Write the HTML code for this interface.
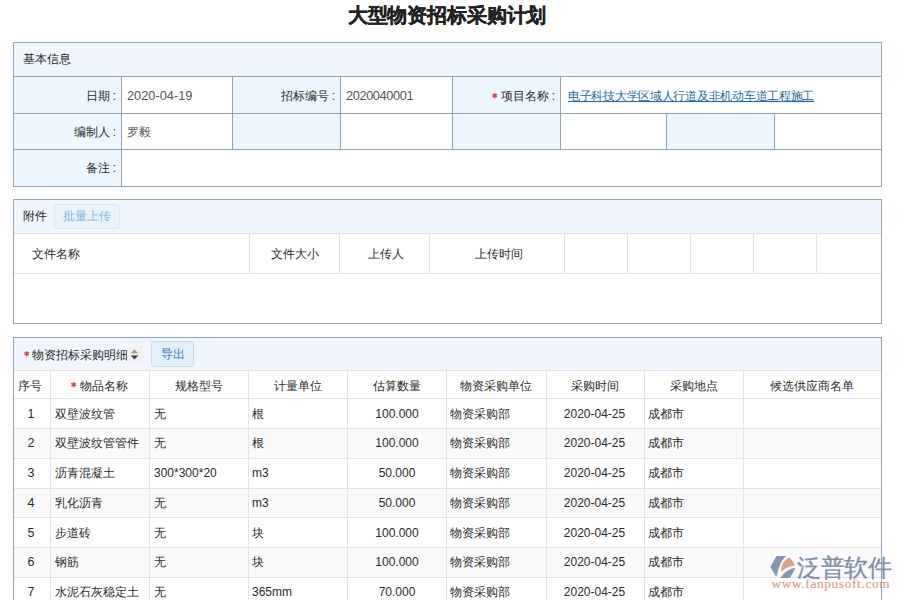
<!DOCTYPE html>
<html><head><meta charset="utf-8"><style>
html,body{margin:0;padding:0;}
body{width:900px;height:600px;position:relative;overflow:hidden;background:#fff;font-family:"Liberation Sans",sans-serif;}
body>div,body>span{position:absolute;box-sizing:border-box;}
.t{white-space:nowrap;}
</style></head><body>
<span class="t" style="left:297.0px;top:4px;width:300px;text-align:center;font-size:20px;color:#222;font-weight:bold;line-height:22px;letter-spacing:-0.15px;-webkit-text-stroke:0.35px #222">大型物资招标采购计划</span>
<div style="left:13px;top:42px;width:869px;height:145px;background:#fff"></div>
<div style="left:13px;top:42px;width:869px;height:34px;background:#f1f6fe"></div>
<div style="left:13px;top:76px;width:108px;height:110px;background:#eff7fe"></div>
<div style="left:232px;top:76px;width:108px;height:37px;background:#eff7fe"></div>
<div style="left:452px;top:76px;width:108px;height:37px;background:#eff7fe"></div>
<div style="left:232px;top:113px;width:108px;height:36px;background:#eff7fe"></div>
<div style="left:452px;top:113px;width:108px;height:36px;background:#eff7fe"></div>
<div style="left:666px;top:113px;width:108px;height:36px;background:#eff7fe"></div>
<div style="left:13px;top:42px;width:869px;height:1px;background:#8fa6b2"></div>
<div style="left:13px;top:76px;width:869px;height:1px;background:#8fa6b2"></div>
<div style="left:13px;top:113px;width:869px;height:1px;background:#8fa6b2"></div>
<div style="left:13px;top:149px;width:869px;height:1px;background:#8fa6b2"></div>
<div style="left:13px;top:186px;width:869px;height:1px;background:#8fa6b2"></div>
<div style="left:13px;top:42px;width:1px;height:145px;background:#8fa6b2"></div>
<div style="left:881px;top:42px;width:1px;height:145px;background:#8fa6b2"></div>
<div style="left:121px;top:76px;width:1px;height:110px;background:#8fa6b2"></div>
<div style="left:232px;top:76px;width:1px;height:73px;background:#8fa6b2"></div>
<div style="left:340px;top:76px;width:1px;height:73px;background:#8fa6b2"></div>
<div style="left:452px;top:76px;width:1px;height:73px;background:#8fa6b2"></div>
<div style="left:560px;top:76px;width:1px;height:73px;background:#8fa6b2"></div>
<div style="left:666px;top:113px;width:1px;height:36px;background:#8fa6b2"></div>
<div style="left:774px;top:113px;width:1px;height:36px;background:#8fa6b2"></div>
<span class="t" style="left:23px;top:50.5px;font-size:12px;color:#2a2a2a;line-height:16px">基本信息</span>
<span class="t" style="left:-184px;top:88px;width:300px;text-align:right;font-size:12px;color:#2a2a2a;line-height:16px">日期<span style="margin-left:3px">:</span></span>
<span class="t" style="left:127px;top:88px;font-size:12.8px;color:#555;line-height:16px">2020-04-19</span>
<span class="t" style="left:35px;top:88px;width:300px;text-align:right;font-size:12px;color:#2a2a2a;line-height:16px">招标编号<span style="margin-left:3px">:</span></span>
<span class="t" style="left:346px;top:88px;font-size:12.8px;color:#555;line-height:16px;letter-spacing:-0.4px">2020040001</span>
<svg style="position:absolute;left:491.3px;top:92.1px" width="7.4" height="7.4" viewBox="0 0 7.4 7.4"><path d="M3.70 1.00L3.70 6.40M6.04 2.35L1.36 5.05M1.36 2.35L6.04 5.05" stroke="#e23c3c" stroke-width="1.3" fill="none"/></svg>
<span class="t" style="left:255px;top:88px;width:300px;text-align:right;font-size:12px;color:#2a2a2a;line-height:16px">项目名称<span style="margin-left:3px">:</span></span>
<span class="t" style="left:568px;top:88px;font-size:12px;color:#2069a8;line-height:16px;text-decoration:underline;letter-spacing:-0.28px">电子科技大学区域人行道及非机动车道工程施工</span>
<span class="t" style="left:-184px;top:124px;width:300px;text-align:right;font-size:12px;color:#2a2a2a;line-height:16px">编制人<span style="margin-left:3px">:</span></span>
<span class="t" style="left:127px;top:124px;font-size:12px;color:#555;line-height:16px">罗毅</span>
<span class="t" style="left:-184px;top:160px;width:300px;text-align:right;font-size:12px;color:#2a2a2a;line-height:16px">备注<span style="margin-left:3px">:</span></span>
<div style="left:13px;top:199px;width:869px;height:125px;background:#fff"></div>
<div style="left:13px;top:199px;width:869px;height:34px;background:#f1f6fe"></div>
<div style="left:13px;top:199px;width:869px;height:1px;background:#8fa6b2"></div>
<div style="left:13px;top:323px;width:869px;height:1px;background:#8fa6b2"></div>
<div style="left:13px;top:199px;width:1px;height:125px;background:#8fa6b2"></div>
<div style="left:881px;top:199px;width:1px;height:125px;background:#8fa6b2"></div>
<div style="left:14px;top:233px;width:867px;height:1px;background:#e3e3e3"></div>
<div style="left:14px;top:273px;width:867px;height:1px;background:#e3e3e3"></div>
<div style="left:249px;top:233px;width:1px;height:40px;background:#e3e3e3"></div>
<div style="left:339px;top:233px;width:1px;height:40px;background:#e3e3e3"></div>
<div style="left:429px;top:233px;width:1px;height:40px;background:#e3e3e3"></div>
<div style="left:564px;top:233px;width:1px;height:40px;background:#e3e3e3"></div>
<div style="left:627px;top:233px;width:1px;height:40px;background:#e3e3e3"></div>
<div style="left:690px;top:233px;width:1px;height:40px;background:#e3e3e3"></div>
<div style="left:753px;top:233px;width:1px;height:40px;background:#e3e3e3"></div>
<div style="left:816px;top:233px;width:1px;height:40px;background:#e3e3e3"></div>
<span class="t" style="left:23px;top:208px;font-size:12px;color:#2a2a2a;line-height:16px">附件</span>
<div style="left:54px;top:204px;width:64px;height:23px;border:1px solid #dae7f2;background:#eaf3fc;border-radius:3px;box-sizing:content-box"></div>
<span class="t" style="left:47.0px;top:208px;width:80px;text-align:center;font-size:12px;color:#80b6e2;line-height:16px">批量上传</span>
<span class="t" style="left:32px;top:246px;font-size:12px;color:#2a2a2a;line-height:16px">文件名称</span>
<span class="t" style="left:249.5px;top:246px;width:90px;text-align:center;font-size:12px;color:#2a2a2a;line-height:16px">文件大小</span>
<span class="t" style="left:341.0px;top:246px;width:90px;text-align:center;font-size:12px;color:#2a2a2a;line-height:16px">上传人</span>
<span class="t" style="left:433.5px;top:246px;width:130px;text-align:center;font-size:12px;color:#2a2a2a;line-height:16px">上传时间</span>
<div style="left:13px;top:337px;width:869px;height:263px;background:#fff"></div>
<div style="left:13px;top:337px;width:869px;height:33px;background:#f1f6fe"></div>
<div style="left:14px;top:428px;width:867px;height:1px;background:#e3e3e3"></div>
<div style="left:14px;top:429px;width:867px;height:29px;background:#fafafa"></div>
<div style="left:14px;top:458px;width:867px;height:1px;background:#e3e3e3"></div>
<div style="left:14px;top:488px;width:867px;height:1px;background:#e3e3e3"></div>
<div style="left:14px;top:489px;width:867px;height:28px;background:#fafafa"></div>
<div style="left:14px;top:517px;width:867px;height:1px;background:#e3e3e3"></div>
<div style="left:14px;top:547px;width:867px;height:1px;background:#e3e3e3"></div>
<div style="left:14px;top:548px;width:867px;height:29px;background:#fafafa"></div>
<div style="left:14px;top:577px;width:867px;height:1px;background:#e3e3e3"></div>
<div style="left:14px;top:607px;width:867px;height:1px;background:#e3e3e3"></div>
<div style="left:14px;top:370px;width:867px;height:1px;background:#e3e3e3"></div>
<div style="left:14px;top:398px;width:867px;height:1px;background:#e3e3e3"></div>
<div style="left:50px;top:370px;width:1px;height:230px;background:#e3e3e3"></div>
<div style="left:149px;top:370px;width:1px;height:230px;background:#e3e3e3"></div>
<div style="left:248px;top:370px;width:1px;height:230px;background:#e3e3e3"></div>
<div style="left:347px;top:370px;width:1px;height:230px;background:#e3e3e3"></div>
<div style="left:446px;top:370px;width:1px;height:230px;background:#e3e3e3"></div>
<div style="left:546px;top:370px;width:1px;height:230px;background:#e3e3e3"></div>
<div style="left:644px;top:370px;width:1px;height:230px;background:#e3e3e3"></div>
<div style="left:743px;top:370px;width:1px;height:230px;background:#e3e3e3"></div>
<svg style="position:absolute;left:22.5px;top:349.90000000000003px" width="7.4" height="7.4" viewBox="0 0 7.4 7.4"><path d="M3.70 1.00L3.70 6.40M6.04 2.35L1.36 5.05M1.36 2.35L6.04 5.05" stroke="#e23c3c" stroke-width="1.3" fill="none"/></svg>
<span class="t" style="left:32px;top:346.5px;font-size:12px;color:#2a2a2a;line-height:16px">物资招标采购明细</span>
<div style="left:127px;top:346px;width:16px;height:16px;background:#f1f1f1"></div>
<svg style="position:absolute;left:126px;top:346px" width="17" height="16" viewBox="0 0 17 16"><path d="M4.7 7.2 L8.5 3.4 L12.3 7.2 Z" fill="#9a9a9a"/><path d="M4.7 9.6 L8.5 13.6 L12.3 9.6 Z" fill="#404040"/></svg>
<div style="left:151px;top:341px;width:41px;height:24px;border:1px solid #c6dbed;background:#e3effb;border-radius:3px;box-sizing:content-box"></div>
<span class="t" style="left:147.5px;top:345.5px;width:50px;text-align:center;font-size:12px;color:#2a78c0;line-height:16px">导出</span>
<span class="t" style="left:11.8px;top:377.5px;width:37px;text-align:center;font-size:12px;color:#2a2a2a;line-height:16px">序号</span>
<svg style="position:absolute;left:69.7px;top:381.2px" width="7.4" height="7.4" viewBox="0 0 7.4 7.4"><path d="M3.70 1.00L3.70 6.40M6.04 2.35L1.36 5.05M1.36 2.35L6.04 5.05" stroke="#e23c3c" stroke-width="1.3" fill="none"/></svg>
<span class="t" style="left:79.5px;top:377.5px;font-size:12px;color:#2a2a2a;line-height:16px">物品名称</span>
<span class="t" style="left:128.5px;top:377.5px;width:140px;text-align:center;font-size:12px;color:#2a2a2a;line-height:16px">规格型号</span>
<span class="t" style="left:227.5px;top:377.5px;width:140px;text-align:center;font-size:12px;color:#2a2a2a;line-height:16px">计量单位</span>
<span class="t" style="left:326.5px;top:377.5px;width:140px;text-align:center;font-size:12px;color:#2a2a2a;line-height:16px">估算数量</span>
<span class="t" style="left:426.0px;top:377.5px;width:140px;text-align:center;font-size:12px;color:#2a2a2a;line-height:16px">物资采购单位</span>
<span class="t" style="left:525.0px;top:377.5px;width:140px;text-align:center;font-size:12px;color:#2a2a2a;line-height:16px">采购时间</span>
<span class="t" style="left:623.5px;top:377.5px;width:140px;text-align:center;font-size:12px;color:#2a2a2a;line-height:16px">采购地点</span>
<span class="t" style="left:742.0px;top:377.5px;width:140px;text-align:center;font-size:12px;color:#2a2a2a;line-height:16px">候选供应商名单</span>
<span class="t" style="left:12.5px;top:406px;width:37px;text-align:center;font-size:12.5px;color:#2a2a2a;line-height:16px">1</span>
<span class="t" style="left:55px;top:406px;font-size:12px;color:#2a2a2a;line-height:16px">双壁波纹管</span>
<span class="t" style="left:154px;top:406px;font-size:12px;color:#2a2a2a;line-height:16px">无</span>
<span class="t" style="left:252px;top:406px;font-size:12px;color:#2a2a2a;line-height:16px">根</span>
<span class="t" style="left:347.5px;top:406px;width:99px;text-align:center;font-size:12px;color:#2a2a2a;line-height:16px">100.000</span>
<span class="t" style="left:450px;top:406px;font-size:12px;color:#2a2a2a;line-height:16px">物资采购部</span>
<span class="t" style="left:545.0px;top:406px;width:99px;text-align:center;font-size:12px;color:#2a2a2a;line-height:16px">2020-04-25</span>
<span class="t" style="left:648px;top:406px;font-size:12px;color:#2a2a2a;line-height:16px">成都市</span>
<span class="t" style="left:12.5px;top:435px;width:37px;text-align:center;font-size:12.5px;color:#2a2a2a;line-height:16px">2</span>
<span class="t" style="left:55px;top:435px;font-size:12px;color:#2a2a2a;line-height:16px">双壁波纹管管件</span>
<span class="t" style="left:154px;top:435px;font-size:12px;color:#2a2a2a;line-height:16px">无</span>
<span class="t" style="left:252px;top:435px;font-size:12px;color:#2a2a2a;line-height:16px">根</span>
<span class="t" style="left:347.5px;top:435px;width:99px;text-align:center;font-size:12px;color:#2a2a2a;line-height:16px">100.000</span>
<span class="t" style="left:450px;top:435px;font-size:12px;color:#2a2a2a;line-height:16px">物资采购部</span>
<span class="t" style="left:545.0px;top:435px;width:99px;text-align:center;font-size:12px;color:#2a2a2a;line-height:16px">2020-04-25</span>
<span class="t" style="left:648px;top:435px;font-size:12px;color:#2a2a2a;line-height:16px">成都市</span>
<span class="t" style="left:12.5px;top:465px;width:37px;text-align:center;font-size:12.5px;color:#2a2a2a;line-height:16px">3</span>
<span class="t" style="left:55px;top:465px;font-size:12px;color:#2a2a2a;line-height:16px">沥青混凝土</span>
<span class="t" style="left:154px;top:465px;font-size:12px;color:#2a2a2a;line-height:16px">300*300*20</span>
<span class="t" style="left:252px;top:465px;font-size:12px;color:#2a2a2a;line-height:16px">m3</span>
<span class="t" style="left:347.5px;top:465px;width:99px;text-align:center;font-size:12px;color:#2a2a2a;line-height:16px">50.000</span>
<span class="t" style="left:450px;top:465px;font-size:12px;color:#2a2a2a;line-height:16px">物资采购部</span>
<span class="t" style="left:545.0px;top:465px;width:99px;text-align:center;font-size:12px;color:#2a2a2a;line-height:16px">2020-04-25</span>
<span class="t" style="left:648px;top:465px;font-size:12px;color:#2a2a2a;line-height:16px">成都市</span>
<span class="t" style="left:12.5px;top:495px;width:37px;text-align:center;font-size:12.5px;color:#2a2a2a;line-height:16px">4</span>
<span class="t" style="left:55px;top:495px;font-size:12px;color:#2a2a2a;line-height:16px">乳化沥青</span>
<span class="t" style="left:154px;top:495px;font-size:12px;color:#2a2a2a;line-height:16px">无</span>
<span class="t" style="left:252px;top:495px;font-size:12px;color:#2a2a2a;line-height:16px">m3</span>
<span class="t" style="left:347.5px;top:495px;width:99px;text-align:center;font-size:12px;color:#2a2a2a;line-height:16px">50.000</span>
<span class="t" style="left:450px;top:495px;font-size:12px;color:#2a2a2a;line-height:16px">物资采购部</span>
<span class="t" style="left:545.0px;top:495px;width:99px;text-align:center;font-size:12px;color:#2a2a2a;line-height:16px">2020-04-25</span>
<span class="t" style="left:648px;top:495px;font-size:12px;color:#2a2a2a;line-height:16px">成都市</span>
<span class="t" style="left:12.5px;top:525px;width:37px;text-align:center;font-size:12.5px;color:#2a2a2a;line-height:16px">5</span>
<span class="t" style="left:55px;top:525px;font-size:12px;color:#2a2a2a;line-height:16px">步道砖</span>
<span class="t" style="left:154px;top:525px;font-size:12px;color:#2a2a2a;line-height:16px">无</span>
<span class="t" style="left:252px;top:525px;font-size:12px;color:#2a2a2a;line-height:16px">块</span>
<span class="t" style="left:347.5px;top:525px;width:99px;text-align:center;font-size:12px;color:#2a2a2a;line-height:16px">100.000</span>
<span class="t" style="left:450px;top:525px;font-size:12px;color:#2a2a2a;line-height:16px">物资采购部</span>
<span class="t" style="left:545.0px;top:525px;width:99px;text-align:center;font-size:12px;color:#2a2a2a;line-height:16px">2020-04-25</span>
<span class="t" style="left:648px;top:525px;font-size:12px;color:#2a2a2a;line-height:16px">成都市</span>
<span class="t" style="left:12.5px;top:554px;width:37px;text-align:center;font-size:12.5px;color:#2a2a2a;line-height:16px">6</span>
<span class="t" style="left:55px;top:554px;font-size:12px;color:#2a2a2a;line-height:16px">钢筋</span>
<span class="t" style="left:154px;top:554px;font-size:12px;color:#2a2a2a;line-height:16px">无</span>
<span class="t" style="left:252px;top:554px;font-size:12px;color:#2a2a2a;line-height:16px">块</span>
<span class="t" style="left:347.5px;top:554px;width:99px;text-align:center;font-size:12px;color:#2a2a2a;line-height:16px">100.000</span>
<span class="t" style="left:450px;top:554px;font-size:12px;color:#2a2a2a;line-height:16px">物资采购部</span>
<span class="t" style="left:545.0px;top:554px;width:99px;text-align:center;font-size:12px;color:#2a2a2a;line-height:16px">2020-04-25</span>
<span class="t" style="left:648px;top:554px;font-size:12px;color:#2a2a2a;line-height:16px">成都市</span>
<span class="t" style="left:12.5px;top:584px;width:37px;text-align:center;font-size:12.5px;color:#2a2a2a;line-height:16px">7</span>
<span class="t" style="left:55px;top:584px;font-size:12px;color:#2a2a2a;line-height:16px">水泥石灰稳定土</span>
<span class="t" style="left:154px;top:584px;font-size:12px;color:#2a2a2a;line-height:16px">无</span>
<span class="t" style="left:252px;top:584px;font-size:12px;color:#2a2a2a;line-height:16px">365mm</span>
<span class="t" style="left:347.5px;top:584px;width:99px;text-align:center;font-size:12px;color:#2a2a2a;line-height:16px">70.000</span>
<span class="t" style="left:450px;top:584px;font-size:12px;color:#2a2a2a;line-height:16px">物资采购部</span>
<span class="t" style="left:545.0px;top:584px;width:99px;text-align:center;font-size:12px;color:#2a2a2a;line-height:16px">2020-04-25</span>
<span class="t" style="left:648px;top:584px;font-size:12px;color:#2a2a2a;line-height:16px">成都市</span>
<svg style="position:absolute;left:765px;top:550px" width="40" height="32" viewBox="0 0 40 32">
<path d="M11.5 6.1 L21.1 6.1 C16.5 10.5 14 16 11.6 26.1 L10.7 26.1 L5.3 17.1 Z" fill="#8795b0"/>
<path d="M16 21.9 C16 15 19 10 24.3 7.5 C26.5 9 28.5 12 29.9 15.5 C25 16 20 18 16 21.9 Z" fill="#dea182"/>
<path d="M15.5 28 L25 28 L30.4 17.9 C24 18.5 19 22 15.5 28 Z" fill="#8795b0"/>
</svg>
<span class="t" style="left:797px;top:554px;font-size:23.5px;color:#7f8eaa;line-height:28px;letter-spacing:-0.3px;-webkit-text-stroke:0.3px #7f8eaa">泛普软件</span>
<span class="t" style="left:771.5px;top:577px;font-size:13.2px;color:#d9a086;line-height:14px;letter-spacing:0.7px;-webkit-text-stroke:0.2px #d9a086;font-family:'Liberation Serif',serif">www.fanpusoft.com</span>
<div style="left:13px;top:337px;width:869px;height:1px;background:#8fa6b2"></div>
<div style="left:13px;top:337px;width:1px;height:263px;background:#8fa6b2"></div>
<div style="left:881px;top:337px;width:1px;height:263px;background:#8fa6b2"></div>
</body></html>
